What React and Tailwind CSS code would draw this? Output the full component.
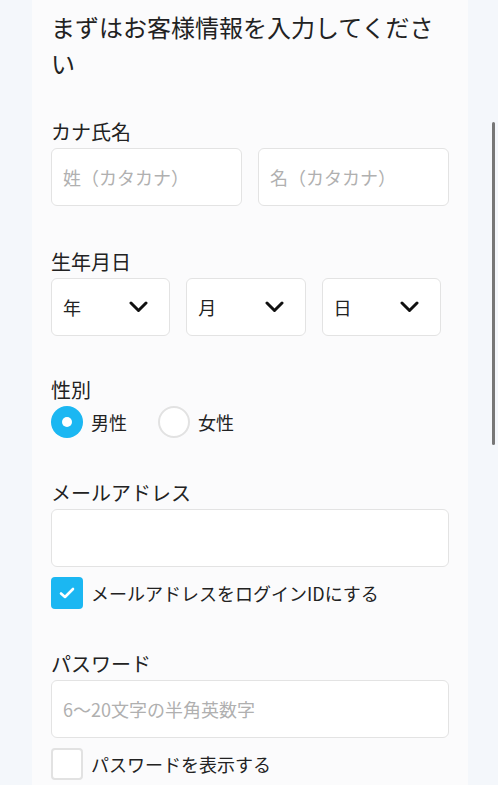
import React, { useState } from "react";

const Label = ({ children }) => (
  <div className="text-[20px] leading-[28px] text-[#222] mb-[2px]">{children}</div>
);

const TextInput = ({ placeholder, className = "" }) => (
  <input
    type="text"
    placeholder={placeholder}
    className={`h-[58px] rounded-[6px] border border-[#e3e3e3] bg-white px-[11px] text-[18px] text-[#222] placeholder:text-[#b0b0b0] focus:outline-none ${className}`}
  />
);

const Select = ({ label }) => (
  <div className="w-[30%] h-[58px] rounded-[6px] border border-[#e3e3e3] bg-white flex items-center justify-between pl-[11px] pr-[21px]">
    <span className="text-[18px] text-[#222]">{label}</span>
    <svg width="19" height="12" viewBox="0 0 19 12" fill="none">
      <path d="M2 2l7.5 7.5L17 2" stroke="#111" strokeWidth="3" strokeLinecap="round" strokeLinejoin="round" />
    </svg>
  </div>
);

const Radio = ({ checked, label, onClick }) => (
  <button type="button" onClick={onClick} className="flex items-center gap-[8px]">
    {checked ? (
      <span className="w-[32px] h-[32px] rounded-full bg-[#1bb7f2] flex items-center justify-center">
        <span className="w-[10px] h-[10px] rounded-full bg-white" />
      </span>
    ) : (
      <span className="w-[32px] h-[32px] rounded-full border-2 border-[#e2e2e2] bg-white" />
    )}
    <span className="text-[18px] text-[#222]">{label}</span>
  </button>
);

const Checkbox = ({ checked, label, onClick }) => (
  <button type="button" onClick={onClick} className="flex items-center gap-[8px]">
    {checked ? (
      <span className="w-[32px] h-[32px] rounded-[4px] bg-[#1bb7f2] flex items-center justify-center">
        <svg width="16" height="12" viewBox="0 0 16 12" fill="none">
          <path d="M2 6.5l4 3.5L14 2" stroke="#fff" strokeWidth="2.6" strokeLinecap="round" strokeLinejoin="round" />
        </svg>
      </span>
    ) : (
      <span className="w-[32px] h-[32px] rounded-[4px] border-2 border-[#e2e2e2] bg-white" />
    )}
    <span className="text-[18px] text-[#222]">{label}</span>
  </button>
);

export default function App() {
  const [gender, setGender] = useState("male");
  const [useEmail, setUseEmail] = useState(true);
  const [showPw, setShowPw] = useState(false);

  return (
    <div
      className="min-h-[785px] bg-[#f4f7fb] pl-[32px] pr-[30px]"
      style={{ fontFamily: '"Noto Sans CJK JP", "Noto Sans", sans-serif' }}
    >
      <div className="bg-[#fbfbfc] min-h-[900px] px-[19px] pt-[9px] pb-[40px]">
        <h1 className="text-[24px] leading-[36px] text-[#222] font-normal">
          まずはお客様情報を入力してください
        </h1>

        <section className="mt-[37px]">
          <Label>カナ氏名</Label>
          <div className="flex gap-[16px]">
            <TextInput placeholder="姓（カタカナ）" className="w-0 flex-1" />
            <TextInput placeholder="名（カタカナ）" className="w-0 flex-1" />
          </div>
        </section>

        <section className="mt-[42px]">
          <Label>生年月日</Label>
          <div className="flex gap-[4%]">
            <Select label="年" />
            <Select label="月" />
            <Select label="日" />
          </div>
        </section>

        <section className="mt-[40px]">
          <Label>性別</Label>
          <div className="flex items-center gap-[31px]">
            <Radio checked={gender === "male"} label="男性" onClick={() => setGender("male")} />
            <Radio checked={gender === "female"} label="女性" onClick={() => setGender("female")} />
          </div>
        </section>

        <section className="mt-[41px]">
          <Label>メールアドレス</Label>
          <TextInput className="w-full" />
          <div className="mt-[10px]">
            <Checkbox checked={useEmail} label="メールアドレスをログインIDにする" onClick={() => setUseEmail(!useEmail)} />
          </div>
        </section>

        <section className="mt-[41px]">
          <Label>パスワード</Label>
          <TextInput placeholder="6〜20文字の半角英数字" className="w-full" />
          <div className="mt-[10px]">
            <Checkbox checked={showPw} label="パスワードを表示する" onClick={() => setShowPw(!showPw)} />
          </div>
        </section>
      </div>

      <div className="fixed right-[3px] top-[122px] w-[3px] h-[323px] rounded-full bg-[#777]" />
    </div>
  );
}
